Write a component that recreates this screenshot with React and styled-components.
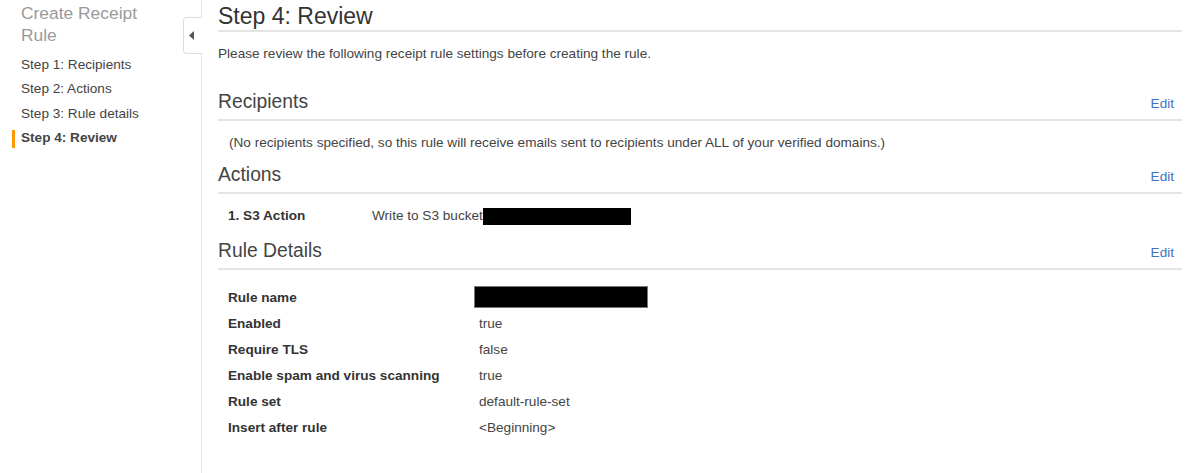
import styled, { createGlobalStyle } from 'styled-components';

const GlobalStyle = createGlobalStyle`
  html, body {
    margin: 0;
    padding: 0;
    background: #fff;
  }
  body {
    font-family: "Liberation Sans", Arial, sans-serif;
    font-size: 13.6px;
    color: #444;
  }
`;

const steps = [
  { id: 1, label: 'Step 1: Recipients' },
  { id: 2, label: 'Step 2: Actions' },
  { id: 3, label: 'Step 3: Rule details' },
  { id: 4, label: 'Step 4: Review' },
];

const details = [
  { label: 'Rule name', value: null },
  { label: 'Enabled', value: 'true' },
  { label: 'Require TLS', value: 'false' },
  { label: 'Enable spam and virus scanning', value: 'true' },
  { label: 'Rule set', value: 'default-rule-set' },
  { label: 'Insert after rule', value: '<Beginning>' },
];

function App() {
  const activeStep = 4;

  return (
    <Page>
      <GlobalStyle />
      <Sidebar>
        <SideTitle>Create Receipt Rule</SideTitle>
        <StepList>
          {steps.map((step) => (
            <StepItem key={step.id} $active={step.id === activeStep}>
              {step.label}
            </StepItem>
          ))}
        </StepList>
        <CollapseTab>
          <svg width="5" height="9" viewBox="0 0 5 9">
            <path d="M5 0 L0 4.5 L5 9 Z" fill="#555" />
          </svg>
        </CollapseTab>
      </Sidebar>

      <Main>
        <Title>Step 4: Review</Title>
        <Intro>Please review the following receipt rule settings before creating the rule.</Intro>

        <SectionHeader $gap={28}>
          <SectionTitle>Recipients</SectionTitle>
          <EditLink>Edit</EditLink>
        </SectionHeader>
        <Note>
          (No recipients specified, so this rule will receive emails sent to recipients under ALL of
          your verified domains.)
        </Note>

        <SectionHeader $gap={12}>
          <SectionTitle>Actions</SectionTitle>
          <EditLink>Edit</EditLink>
        </SectionHeader>
        <ActionRow>
          <ActionLabel>1. S3 Action</ActionLabel>
          <span>
            Write to S3 bucket
            <Redacted $w={148} $h={17} />
          </span>
        </ActionRow>

        <SectionHeader $gap={15}>
          <SectionTitle>Rule Details</SectionTitle>
          <EditLink>Edit</EditLink>
        </SectionHeader>
        <DetailTable>
          {details.map((row) => (
            <DetailRow key={row.label}>
              <DetailLabel>{row.label}</DetailLabel>
              <DetailValue>
                {row.value === null ? <Redacted $w={174} $h={22} $shift={-5} $bordered /> : row.value}
              </DetailValue>
            </DetailRow>
          ))}
        </DetailTable>
      </Main>
    </Page>
  );
}

export default App;

const Page = styled.div`
  display: flex;
  min-height: 473px;
  padding-right: 18px;
`;

const Sidebar = styled.aside`
  position: relative;
  flex: 0 0 202px;
  border-right: 1px solid #e6e6e6;
  padding: 2px 0 0 21px;
  box-sizing: border-box;
`;

const SideTitle = styled.div`
  width: 150px;
  font-size: 17.4px;
  line-height: 22px;
  color: #9a9a9a;
`;

const StepList = styled.ul`
  list-style: none;
  margin: 7px 0 0;
  padding: 0;
`;

const StepItem = styled.li`
  position: relative;
  line-height: 24.4px;
  color: #444;
  font-weight: ${(p) => (p.$active ? 700 : 400)};

  &::before {
    content: '';
    display: ${(p) => (p.$active ? 'block' : 'none')};
    position: absolute;
    left: -9px;
    top: 4px;
    width: 3px;
    height: 18px;
    background: #f90;
  }
`;

const CollapseTab = styled.div`
  position: absolute;
  top: 17px;
  right: -1px;
  width: 19px;
  height: 37px;
  border: 1px solid #ddd;
  border-right: none;
  border-radius: 4px 0 0 4px;
  background: #fff;
  display: flex;
  align-items: center;
  justify-content: center;
  box-sizing: border-box;
  padding-right: 3px;
`;

const Main = styled.main`
  flex: 1;
  display: flex;
  flex-direction: column;
  padding-left: 16px;
`;

const Title = styled.h1`
  margin: 0;
  padding-top: 2px;
  font-size: 23px;
  line-height: 28px;
  font-weight: 400;
  color: #333;
  border-bottom: 2px solid #e4e4e4;
`;

const Intro = styled.p`
  margin: 13px 0 0;
  line-height: 18px;
`;

const SectionHeader = styled.div`
  display: flex;
  justify-content: space-between;
  align-items: baseline;
  margin-top: ${(p) => p.$gap}px;
  padding-bottom: 6px;
  border-bottom: 2px solid #e4e4e4;
`;

const SectionTitle = styled.h2`
  margin: 0;
  font-size: 19.3px;
  line-height: 22px;
  font-weight: 400;
  color: #444;
`;

const EditLink = styled.a`
  margin-right: 8px;
  font-size: 13.6px;
  color: #3f74c3;
  cursor: pointer;
`;

const Note = styled.p`
  margin: 13px 0 0;
  padding-left: 11px;
  line-height: 18px;
`;

const ActionRow = styled.div`
  display: grid;
  grid-template-columns: 144px 1fr;
  margin-top: 13px;
  padding-left: 10px;
  line-height: 18px;
`;

const ActionLabel = styled.span`
  font-weight: 700;
  color: #333;
`;

const Redacted = styled.span`
  display: inline-block;
  vertical-align: middle;
  width: ${(p) => p.$w}px;
  height: ${(p) => p.$h}px;
  margin-left: ${(p) => p.$shift || 0}px;
  background: #000;
  box-sizing: border-box;
  border: ${(p) => (p.$bordered ? '1px solid #777' : 'none')};
`;

const DetailTable = styled.div`
  margin-top: 14px;
  padding-left: 10px;
`;

const DetailRow = styled.div`
  display: grid;
  grid-template-columns: 251px 1fr;
  height: 26px;
  align-items: center;
`;

const DetailLabel = styled.span`
  font-weight: 700;
  color: #333;
`;

const DetailValue = styled.span`
  display: flex;
  align-items: center;
`;
